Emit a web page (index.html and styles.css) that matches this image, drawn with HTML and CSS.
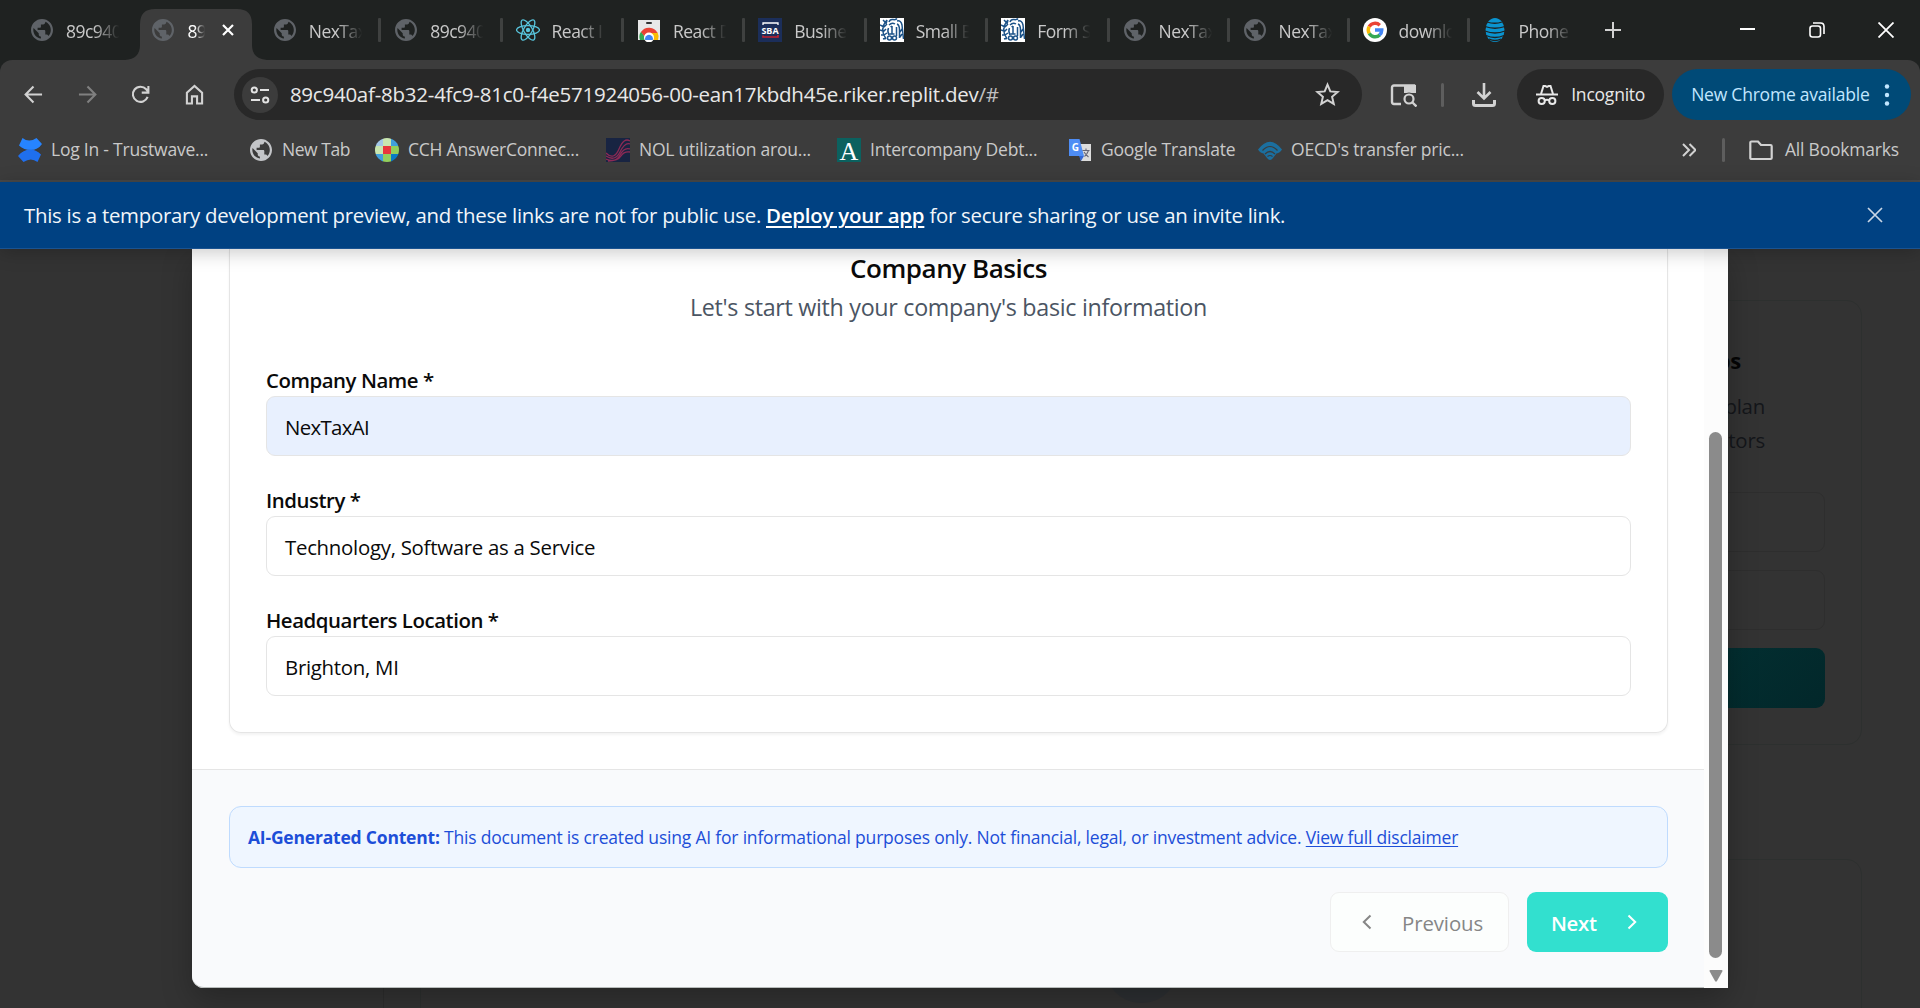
FILE: index.html
```html
<!DOCTYPE html>
<html lang="en">
<head>
<meta charset="utf-8">
<title>NexTax</title>
<link rel="stylesheet" href="styles.css">
</head>
<body>
<svg class="defs" width="0" height="0" aria-hidden="true">
  <symbol id="globe" viewBox="2 2 20 20"><path fill="currentColor" d="M12 2C6.480 2 2 6.480 2 12s4.480 10 10 10 10-4.480 10-10S17.520 2 12 2zm-1 17.700c-3.950-.49-6.900-3.700-6.900-7.700 0-.62.08-1.210.21-1.790L9 15v1c0 1.100.9 2 2 2zm6.900-2.300c-.26-.81-1-1.390-1.900-1.390h-1v-3c0-.55-.45-1-1-1H8v-2h2c.55 0 1-.45 1-1V7h2c1.100 0 2-.9 2-2v-.41c2.930 1.190 5 4.060 5 7.410 0 2.080-.8 3.970-2.100 5.390z"/></symbol>
  <symbol id="irs" viewBox="0 0 24 24">
    <rect width="24" height="24" fill="#fff"/>
    <g fill="none" stroke="#1b5288" stroke-width="1.500">
      <path d="M7 2Q-1 11 6 21M3 2l3 3M7 2l-1 4M0 7l4 2M7 6L4 9M0 12l3 1M6 11l-3 3M1 17l3 0M7 15l-3 2M3 21l3-1"/>
      <path d="M9 4q1-3 4-2.500 3 .5 4-1M9 7q3-3 6-1M17 3q4-1 5 4l1.500 14M17 6q2.500 1 2.500 6v8M16.500 9v9M22 11l-2 3M22 16l-2 3"/>
      <path d="M12 8v8M10.500 9l1.500-1M9.500 16h5M8.500 10q-1.500 3 .5 7"/>
      <circle cx="9.500" cy="20" r="2"/><circle cx="14.500" cy="20" r="2"/>
    </g>
  </symbol>
</svg>

<header class="browser">
  <div class="tabs">
    <div class="tab first"><svg class="fav globe"><use href="#globe"/></svg><span class="tab-text">89c940</span></div>
    <div class="tab active first">
      <svg class="tab-shape" viewBox="0 0 142 51"><path fill="#3c3c3c" d="M0 51Q15 50 15 36V15Q15 0 30 0H112Q127 0 127 15V36Q127 50 142 51Z"/></svg>
      <svg class="fav globe"><use href="#globe"/></svg><span class="tab-text short">89</span>
      <svg class="tab-close" viewBox="0 0 12 12"><path d="M1 1l10 10M11 1L1 11" stroke="#fff" stroke-width="2.200"/></svg>
    </div>
    <div class="tab first"><svg class="fav globe"><use href="#globe"/></svg><span class="tab-text">NexTax</span></div>
    <div class="tab"><svg class="fav globe"><use href="#globe"/></svg><span class="tab-text">89c940</span></div>
    <div class="tab"><svg class="fav" viewBox="0 0 24 24"><g fill="none" stroke="#58c4dc" stroke-width="1.300"><ellipse cx="12" cy="12" rx="11.500" ry="4.300"/><ellipse cx="12" cy="12" rx="11.500" ry="4.300" transform="rotate(60 12 12)"/><ellipse cx="12" cy="12" rx="11.500" ry="4.300" transform="rotate(120 12 12)"/></g><circle cx="12" cy="12" r="2.200" fill="#58c4dc"/></svg><span class="tab-text">React I</span></div>
    <div class="tab"><svg class="fav" viewBox="0 0 24 24"><path fill="#e8e8e8" d="M1 2h22v20H1z"/><rect x="9" y="4" width="6" height="2" rx="1" fill="#333"/><path fill="#34a853" d="M3 22a9 9 0 0 1 1.200-8.500L10 22z"/><path fill="#fbbc04" d="M12 14.500h8.600A9 9 0 0 1 21 22h-9z"/><path fill="#e94235" d="M4 14a9.500 9.500 0 0 1 16.500 1H12l-4 4z"/><circle cx="12" cy="19.500" r="5" fill="#fff"/><path fill="#4285f4" d="M8.200 22a4 4 0 1 1 7.600 0z"/></svg><span class="tab-text">React D</span></div>
    <div class="tab"><svg class="fav" viewBox="0 0 24 24"><path fill="#1b2e5a" d="M0 0h24v24H0z"/><path fill="none" stroke="#fff" stroke-width="1.300" d="M5 7V5h15v2"/><path fill="none" stroke="#c5202e" stroke-width="1.600" d="M5 17.500v1.500h15v-2"/><text x="12" y="15.500" text-anchor="middle" class="sba">SBA</text></svg><span class="tab-text">Busine</span></div>
    <div class="tab"><svg class="fav"><use href="#irs"/></svg><span class="tab-text">Small B</span></div>
    <div class="tab"><svg class="fav"><use href="#irs"/></svg><span class="tab-text">Form S</span></div>
    <div class="tab late"><svg class="fav globe"><use href="#globe"/></svg><span class="tab-text">NexTax</span></div>
    <div class="tab late"><svg class="fav globe"><use href="#globe"/></svg><span class="tab-text">NexTax</span></div>
    <div class="tab late"><svg class="fav" viewBox="0 0 24 24"><circle cx="12" cy="12" r="12" fill="#fff"/><g fill="none" stroke-width="3.400"><path stroke="#ea4335" d="M6.200 8.600A6.800 6.800 0 0 1 16.800 7.200"/><path stroke="#fbbc04" d="M6.200 15.400A6.800 6.800 0 0 1 6.200 8.600"/><path stroke="#34a853" d="M16.800 16.900A6.800 6.800 0 0 1 6.200 15.400"/><path stroke="#4285f4" d="M12 12h6.800A6.800 6.800 0 0 1 16.500 17.100"/></g></svg><span class="tab-text">downlo</span></div>
    <div class="tab late"><svg class="fav" viewBox="0 0 24 24"><ellipse cx="12" cy="12" rx="9.500" ry="12" fill="#0a94d0"/><g fill="none" stroke="#1f2221" stroke-width="1.300"><path d="M4 4q8 2.500 15 0M2 8.500q10 3.500 20 0M2 13q10 4 20 0M3 17.500q9 4 18 0M6 21q6 3 12 0"/></g></svg><span class="tab-text">Phone</span></div>
    <svg class="new-tab" viewBox="0 0 16 16"><path d="M8 0v16M0 8h16" stroke="#d2d2d2" stroke-width="2"/></svg>
    <div class="window-buttons">
      <svg viewBox="0 0 16 16"><path d="M0 7h15" stroke="#fff" stroke-width="2"/></svg>
      <svg viewBox="0 0 16 16"><rect x="1" y="4" width="10.500" height="11" rx="2.500" fill="none" stroke="#fff" stroke-width="1.600"/><path d="M4 1h7.500Q15 1 15 4.500V12" fill="none" stroke="#fff" stroke-width="1.600"/></svg>
      <svg viewBox="0 0 16 16"><path d="M.5 .5l15 15M15.500 .5l-15 15" stroke="#fff" stroke-width="1.800"/></svg>
    </div>
  </div>

  <div class="toolbar">
    <nav class="nav">
      <svg viewBox="0 0 20 20"><path d="M19 10H2M10 1.500L1.700 10l8.300 8.500" fill="none" stroke="#d2d2d2" stroke-width="2.200"/></svg>
      <svg viewBox="0 0 20 20"><path d="M1 10h17M10 1.500l8.300 8.500-8.300 8.500" fill="none" stroke="#808080" stroke-width="2.200"/></svg>
      <svg viewBox="0 0 20 20"><path d="M17.500 12.500A8 8 0 1 1 16 4.500L18 7M18.300 1v7h-7" fill="none" stroke="#d2d2d2" stroke-width="2.200"/></svg>
      <svg viewBox="0 0 20 22"><path d="M2 20.500V9l8-7 8 7v11.500h-5.300v-7.500H7.300v7.500z" fill="none" stroke="#d2d2d2" stroke-width="2.200"/></svg>
    </nav>
    <div class="omnibox">
      <span class="site"><svg viewBox="0 0 20 20"><g fill="none" stroke="#e3e3e3" stroke-width="2"><circle cx="4.300" cy="5" r="2.600"/><path d="M10 5h9M1 15h9"/><circle cx="15.700" cy="15" r="2.600"/></g></svg></span>
      <span class="url">89c940af-8b32-4fc9-81c0-f4e571924056-00-ean17kbdh45e.riker.replit.dev<i>/#</i></span>
      <svg class="star" viewBox="0 0 24 24"><path d="M12 2.500l2.700 6.500 7 .6-5.300 4.600 1.600 6.800-6-3.600L6 21l1.600-6.800L2.300 9.600l7-.6z" fill="none" stroke="#d2d2d2" stroke-width="1.900"/></svg>
    </div>
    <svg class="panel" viewBox="0 0 27 23"><path d="M11 20H4Q2 20 2 18V3.500Q2 1.500 4 1.500H24V7" fill="none" stroke="#d2d2d2" stroke-width="2.400"/><path d="M14 1h12v8H14z" fill="#d2d2d2"/><circle cx="19" cy="15" r="6.500" fill="#3c3c3c"/><circle cx="19" cy="15" r="4.500" fill="none" stroke="#d2d2d2" stroke-width="2.200"/><path d="M22 18l4.500 4.500" stroke="#d2d2d2" stroke-width="2.400"/></svg>
    <span class="divider tool"></span>
    <svg class="download" viewBox="0 0 24 24"><path d="M12 0v15M5.500 9l6.500 6.500L18.500 9" fill="none" stroke="#d2d2d2" stroke-width="2.600"/><path d="M1.500 17v3.500Q1.500 22.500 3.500 22.500h17q2 0 2-2V17" fill="none" stroke="#d2d2d2" stroke-width="3"/></svg>
    <div class="incognito">
      <svg viewBox="0 0 22 22"><g fill="none" stroke="#e8e8e8" stroke-width="2"><path d="M0 10.500h22M5 10L7.500 2h1.800l1.700.8 1.700-.8h1.800L17 10"/><circle cx="5.700" cy="17" r="3.100"/><circle cx="16.300" cy="17" r="3.100"/><path d="M8.500 16.500q2.500-1.500 5 0"/></g></svg>
      <span>Incognito</span>
    </div>
    <div class="update"><span>New Chrome available</span><svg viewBox="0 0 6 22"><g fill="#c2e7ff"><circle cx="3" cy="2.500" r="2.200"/><circle cx="3" cy="11" r="2.200"/><circle cx="3" cy="19.500" r="2.200"/></g></svg></div>
  </div>

  <div class="bookmarks">
    <div class="bm b1"><svg viewBox="0 0 24 24"><path fill="#2684ff" d="M1 7.500L4.500 0q6.500 5 14 0L24 6Q20 12 12.500 12 6 12 1 7.500z"/><path fill="#1f6fee" d="M0 18q5-6.500 12-6.500 6 0 11 5L19.500 24q-6.500-5-14 0z"/><path fill="#3c3c3c" d="M0 8.500L7.500 12 0 16zM24 8v8l-6.500-4z"/></svg><span>Log In - Trustwave...</span></div>
    <div class="bm b2"><svg class="g"><use href="#globe"/></svg><span>New Tab</span></div>
    <div class="bm b3"><svg viewBox="0 0 24 24"><defs><clipPath id="rd"><circle cx="12" cy="12" r="12"/></clipPath></defs><g clip-path="url(#rd)"><path fill="#a3c7e8" d="M0 0h8v8H0z"/><path fill="#c9e6b0" d="M8 0h8v8H8zM0 8h8v8H0z"/><path fill="#409fdc" d="M16 0h8v8h-8zM0 16h8v8H0z"/><path fill="#e8363d" d="M8 8h8v8H8z"/><path fill="#93cf5c" d="M16 8h8v8h-8zM8 16h8v8H8z"/><path fill="#0a7bc4" d="M16 16h8v8h-8z"/></g></svg><span>CCH AnswerConnec...</span></div>
    <div class="bm b4"><svg viewBox="0 0 24 24"><path fill="#182442" d="M0 0h24v24H0z"/><g fill="none" stroke="#8c2a55" stroke-width="1.300"><path d="M0 15q8 8 13-4T24 3M0 18q9 6 14-4t10-8M0 21q10 4 14-4t10-6M2 23q10 0 13-5t9-4"/></g></svg><span>NOL utilization arou...</span></div>
    <div class="bm b5"><svg viewBox="0 0 24 24"><path fill="#0b615f" d="M0 0h24v24H0z"/><text x="12" y="22" text-anchor="middle" class="serif-a">A</text></svg><span>Intercompany Debt...</span></div>
    <div class="bm b6"><svg viewBox="0 0 24 24"><path fill="#dcdcdc" d="M10 6h13v17H13z"/><path fill="#3367d6" d="M11 18h5l-3 5z"/><path fill="#4e8df5" d="M1 1h10.500l4.500 17H1z"/><text x="7.300" y="13" text-anchor="middle" class="tr-g">G</text><path d="M14.500 12.500h7M18 10.500v2M20.500 12.500q-1.500 4-4 6M16 14q2 3 4.500 5" fill="none" stroke="#667" stroke-width="1.100"/></svg><span>Google Translate</span></div>
    <div class="bm b7"><svg viewBox="0 0 24 24"><path fill="#1b6f9f" d="M0 11.500Q12-4 24 11.500 22 15 18.500 15.500L15 20q-3 4-6 0l-3.500-4.500Q2 15 0 11.500z"/><g fill="none" stroke="#3c3c3c" stroke-width="1.200"><path d="M4.500 12.500Q12 4.500 19.500 12.500M7 16q5-5 10 0M9.500 18.500q2.500-2 5 0"/></g></svg><span>OECD's transfer pric...</span></div>
    <svg class="more" viewBox="0 0 14 14"><path d="M1 1l6 6-6 6M7.500 1l6 6-6 6" fill="none" stroke="#d2d2d2" stroke-width="2"/></svg>
    <span class="divider"></span>
    <div class="bm all"><svg viewBox="0 0 24 24"><path d="M1.300 20V4.500Q1.300 3.500 2.500 3.500H9l3 3.500h9.500q1.200 0 1.200 1.200V20q0 1-1.200 1H2.500q-1.200 0-1.200-1z" fill="none" stroke="#d2d2d2" stroke-width="2.200"/></svg><span>All Bookmarks</span></div>
  </div>
</header>

<div class="banner">
  <p>This is a temporary development preview, and these links are not for public use. <a href="#">Deploy your app</a> for secure sharing or use an invite link.</p>
  <svg viewBox="0 0 16 16"><path d="M1 1l14 14M15 1L1 15" stroke="#c9d6e6" stroke-width="1.700"/></svg>
</div>

<div class="page">
  <aside class="side"></aside>
  <div class="behind">
    <section class="ghost roadmap">
      <h3>Roadmaps</h3>
      <p>Craft your plan</p>
      <p>for investors</p>
      <div class="ghost-input"></div>
      <div class="ghost-input"></div>
      <div class="ghost-button"></div>
    </section>
    <section class="ghost lower"><div class="ghost-icon"></div></section>
  </div>

  <div class="modal">
    <div class="scroll">
      <div class="modal-body">
        <div class="card">
          <h2>Company Basics</h2>
          <p class="sub">Let's start with your company's basic information</p>
          <label>Company Name *</label>
          <div class="input filled">NexTaxAI</div>
          <label>Industry *</label>
          <div class="input">Technology, Software as a Service</div>
          <label>Headquarters Location *</label>
          <div class="input">Brighton, MI</div>
        </div>
      </div>
      <footer class="modal-footer">
        <p class="notice"><b>AI-Generated Content:</b> This document is created using AI for informational purposes only. Not financial, legal, or investment advice. <a href="#">View full disclaimer</a></p>
        <div class="actions">
          <div class="btn prev"><svg viewBox="0 0 10 16"><path d="M8.500 1.500L1.800 8l6.700 6.500" fill="none" stroke="#868686" stroke-width="2"/></svg><span>Previous</span></div>
          <div class="btn next"><span>Next</span><svg viewBox="0 0 10 16"><path d="M1.500 1.500L8.200 8l-6.700 6.500" fill="none" stroke="#fff" stroke-width="2"/></svg></div>
        </div>
      </footer>
    </div>
    <div class="scrollbar"><span class="thumb"></span><svg viewBox="0 0 14 12"><path fill="#8b8b8b" d="M1.500 0h11q1.500 0 .8 1.500L8 11q-1 1.500-2 0L.7 1.500Q0 0 1.500 0z"/></svg></div>
  </div>
</div>
</body>
</html>
```

FILE: styles.css
```css
* { box-sizing: border-box; }
body {
  margin: 0;
  width: 1920px;
  height: 1008px;
  overflow: hidden;
  display: flex;
  flex-direction: column;
  font-family: "Open Sans", "Noto Sans", sans-serif;
  letter-spacing: -0.22px;
  background: #333;
}
h2, h3, p { margin: 0; font-weight: 400; }
svg { display: block; flex: none; }
.defs { position: absolute; }
.browser { background: #1f2221; color: #c9c9c9; font-size: 17.5px; letter-spacing: -0.22px; white-space: nowrap; }

/* Tab strip */
.tabs { height: 60px; display: flex; padding-left: 15px; }
.tab { width: 121.4px; height: 60px; display: flex; align-items: center; position: relative; flex: none; }
.tab.late { width: 120px; }
.tab::before { content: ""; width: 3px; height: 24px; border-radius: 1px; background: #3f4140; margin: 0 13px 0 -1px; }
.tab.first::before { background: none; }
.fav { width: 24px; height: 24px; position: relative; }
.fav.globe { width: 22px; height: 22px; margin: 0 1px; color: #5f6368; }
.tab-text {
  width: 62px;
  margin: 1px 0 0 12px;
  position: relative;
  letter-spacing: -0.03em;
  -webkit-mask-image: linear-gradient(90deg, #000 45%, transparent 86%);
  mask-image: linear-gradient(90deg, #000 45%, transparent 86%);
}
.tab-text.short { width: 20px; color: #fff; -webkit-mask-image: linear-gradient(90deg, #000 40%, transparent 90%); mask-image: linear-gradient(90deg, #000 40%, transparent 90%); }
.tab-shape { position: absolute; left: -11px; top: 9px; width: 142px; height: 51px; }
.tab-close { width: 12px; height: 12px; margin-left: 15px; position: relative; }
.new-tab { width: 16px; height: 16px; margin: 22px 0 0 17px; }
.window-buttons { display: flex; gap: 53px; margin: 22px 26px 0 auto; }
.window-buttons svg { width: 16px; height: 16px; }
.sba { font: 700 9px "Open Sans", sans-serif; fill: #fff; letter-spacing: 0; }

/* Toolbar */
.toolbar { height: 69px; background: #3c3c3c; border-radius: 12px 12px 0 0; display: flex; align-items: center; padding: 0 9px 0 24px; }
.nav { display: flex; gap: 34.5px; width: 210px; align-items: center; }
.nav svg { width: 19px; height: 21px; }
.omnibox { width: 1129px; height: 51px; border-radius: 26px; background: #282828; display: flex; align-items: center; padding: 0 22px 0 8px; }
.site { width: 36px; height: 36px; border-radius: 50%; background: #3c3c3c; display: flex; align-items: center; justify-content: center; }
.site svg { width: 20px; height: 20px; }
.url { flex: 1; margin: -2px 0 0 12px; font-size: 20.500px; color: #e8e8e8; letter-spacing: -0.24px; }
.url i { font-style: normal; color: #c0c0c0; }
.star { width: 25px; height: 25px; }
.panel { width: 27px; height: 23px; margin: 1px 0 0 28px; }
.divider { width: 3px; height: 24px; border-radius: 2px; background: #5e5e5e; }
.divider.tool { margin: 0 28px 0 24px; }
.download { width: 24px; height: 24px; }
.incognito { width: 147px; height: 51px; margin: 0 8px 0 21px; border-radius: 26px; background: #282828; color: #e8e8e8; display: flex; align-items: center; gap: 13px; padding-left: 19px; }
.incognito svg { width: 22px; height: 22px; }
.update { width: 239px; height: 51px; border-radius: 26px; background: #004a77; color: #c2e7ff; display: flex; align-items: center; justify-content: space-between; padding: 0 21px 0 19px; }
.incognito span, .update span { margin-top: -1px; }
.update svg { width: 6px; height: 22px; }

/* Bookmarks bar */
.bookmarks { height: 53px; padding-bottom: 10px; background: #3c3c3c; border-bottom: 2px solid #484848; display: flex; align-items: center; padding-left: 18px; }
.bm { display: flex; align-items: center; gap: 9px; flex: none; }
.bm span { margin-top: -1px; }
.bm svg { width: 24px; height: 24px; }
.bm .g { width: 22px; height: 22px; color: #c3c5c8; }
.b1 { width: 232px; }
.b2 { width: 125px; gap: 10px; letter-spacing: -0.45px; }
.b3 { width: 231px; }
.b4 { width: 231px; }
.b5 { width: 231px; }
.b6 { width: 190px; }
.b7 { width: 424px; }
.more { width: 14px; height: 14px; margin-right: 26px; }
.bookmarks .divider { margin-right: 24px; }
.all { gap: 12px; }
.serif-a { font: 26px "Liberation Serif", serif; fill: #fff; letter-spacing: 0; }
.tr-g { font: 700 10px "Open Sans", sans-serif; fill: #fff; letter-spacing: 0; }

/* Preview banner */
.banner { height: 67px; background: #004182; border-bottom: 1px solid #1a5391; box-shadow: 0 3px 18px rgba(0, 0, 0, .22); display: flex; align-items: center; justify-content: space-between; padding: 0 37px 0 24px; color: #f2f6fa; font-size: 20.400px; letter-spacing: -0.275px; position: relative; z-index: 3; }
.banner a { color: #fff; font-weight: 600; letter-spacing: -0.2px; text-underline-offset: 3px; text-decoration-thickness: 2px; }
.banner svg { width: 16px; height: 16px; }

/* Dimmed page under the dialog */
.page { flex: 1; position: relative; overflow: hidden; background: #333; display: flex; }
.side { width: 384px; border-right: 1px solid #2d2d2d; }
.behind { flex: 1; padding: 51px 58px 0 36px; display: flex; flex-direction: column; align-items: stretch; }
.ghost { border: 1px solid #2d302f; border-radius: 15px; flex: none; }
.roadmap { width: 460px; height: 445px; margin-left: auto; padding: 39px 36px; color: #14161a; }
.roadmap h3 { font-size: 22px; line-height: 40px; font-weight: 700; color: #050505; padding-right: 84px; text-align: right; }
.roadmap p { font-size: 20.400px; line-height: 34px; text-align: right; padding-right: 60px; }
.roadmap h3 + p { margin-top: 9px; }
.ghost-input { height: 60px; margin-top: 18px; border: 1px solid #2e2e2e; border-radius: 9px; }
p + .ghost-input { margin-top: 35px; }
.ghost-button { height: 60px; margin-top: 18px; border-radius: 9px; background: linear-gradient(135deg, #043c3c, #02272a); }
.lower { height: 300px; margin-top: 114px; padding-top: 68px; }
.ghost-icon { width: 75px; height: 75px; border-radius: 50%; background: #2d3033; margin: 0 auto; }

/* Dialog */
.modal { position: absolute; left: 192px; top: 0; width: 1536px; height: 739px; display: flex; box-shadow: 0 12px 30px rgba(0, 0, 0, .25); border-radius: 0 0 12px 12px; background: #fff; color: #0a0a0a; }
.scroll { width: 1512px; display: flex; flex-direction: column; }
.modal-body { height: 520px; padding: 0 36px 36px 37px; }
.card { height: 484px; border: 1px solid #e5e5e5; border-top: 0; border-radius: 0 0 12px 12px; box-shadow: 0 2px 3px rgba(0, 0, 0, .05); padding: 0 36px; display: flex; flex-direction: column; }
.card h2 { font-size: 26px; line-height: 38px; font-weight: 600; text-align: center; letter-spacing: -0.45px; }
.sub { font-size: 23.300px; line-height: 36px; margin: 2px 0 39px; text-align: center; color: #4b5563; letter-spacing: -0.31px; }
.card label { font-size: 20.400px; font-weight: 600; line-height: 32px; letter-spacing: -0.45px; }
.input { height: 60px; margin-bottom: 28px; border: 1px solid #e5e5e5; border-radius: 9px; padding: 1px 18px 0; line-height: 59px; font-size: 20.400px; letter-spacing: -0.275px; }
.input.filled { background: #e8f0fe; letter-spacing: -0.65px; }
.modal-footer { flex: 1; background: #f9fafc; border-top: 1px solid #e5e5e5; border-bottom: 1px solid #b8bcbb; border-radius: 0 0 0 12px; padding: 36px 36px 0 37px; }
.notice { height: 62px; border: 1px solid #bfdbfe; border-radius: 12px; background: #eff6ff; color: #1d4ed8; font-size: 17.500px; line-height: 60px; padding-left: 18px; letter-spacing: -0.2px; }
.notice a { color: inherit; text-underline-offset: 2px; text-decoration-thickness: 1px; }
.actions { display: flex; justify-content: flex-end; gap: 18px; margin-top: 24px; }
.btn { height: 60px; border-radius: 9px; display: flex; align-items: center; font-size: 20.400px; font-weight: 600; letter-spacing: -0.35px; }
.btn span { padding-top: 1px; }
.btn svg { width: 10px; height: 16px; }
.prev { width: 179px; border: 1px solid #efefef; background: #fcfefd; color: #868686; padding-left: 31px; gap: 30px; font-weight: 500; letter-spacing: -0.1px; }
.next { width: 141px; background: #32e0cf; color: #fff; padding-left: 24px; gap: 30px; }
.scrollbar { width: 24px; background: #fcfcfc; display: flex; flex-direction: column; align-items: flex-start; padding: 183px 0 0 5px; }
.thumb { width: 13px; height: 526px; border-radius: 7px; background: #8b8b8b; margin-bottom: 12px; }
.scrollbar svg { width: 14px; height: 12px; }
```
